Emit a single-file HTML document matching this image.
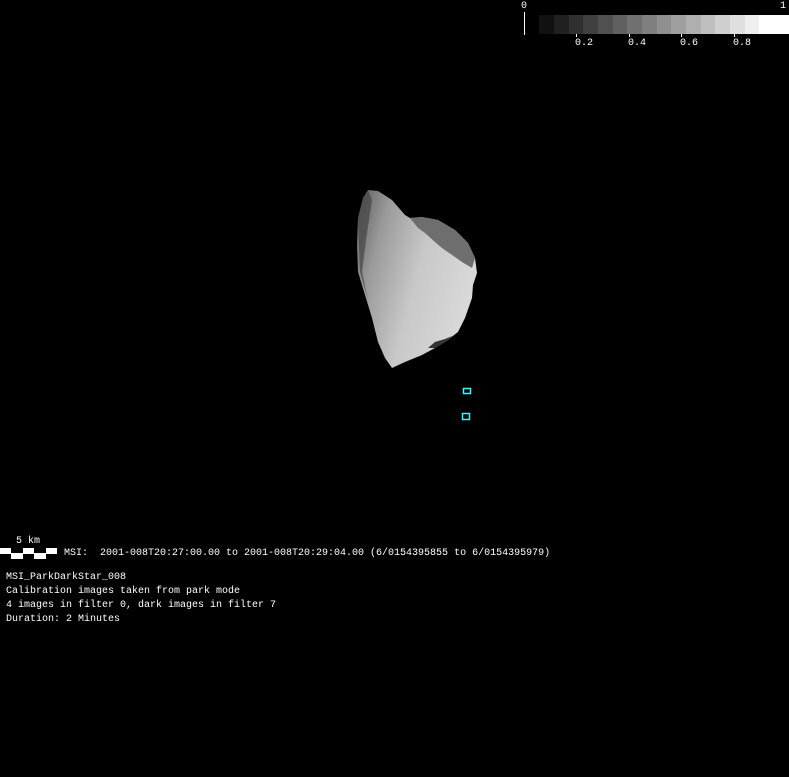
<!DOCTYPE html>
<html><head><meta charset="utf-8"><style>
html,body{margin:0;padding:0;background:#000;width:789px;height:777px;overflow:hidden}
body{position:relative;font-family:"Liberation Mono","DejaVu Sans Mono",monospace;color:#fff;font-size:10px}
.t{position:absolute;white-space:pre;line-height:14px}
</style></head><body>
<svg width="789" height="777" style="position:absolute;left:0;top:0">
<defs>
<linearGradient id="g" x1="0" y1="0" x2="1" y2="0.4">
<stop offset="0" stop-color="#5a5a5a"/>
<stop offset="0.25" stop-color="#9a9a9a"/>
<stop offset="0.6" stop-color="#c8c8c8"/>
<stop offset="1" stop-color="#d8d8d8"/>
</linearGradient>
</defs>
<g>
<rect x="539" y="15" width="15" height="19" fill="#111"/>
<rect x="554" y="15" width="15" height="19" fill="#202020"/>
<rect x="569" y="15" width="14" height="19" fill="#303030"/>
<rect x="583" y="15" width="15" height="19" fill="#404040"/>
<rect x="598" y="15" width="15" height="19" fill="#505050"/>
<rect x="613" y="15" width="14" height="19" fill="#606060"/>
<rect x="627" y="15" width="15" height="19" fill="#707070"/>
<rect x="642" y="15" width="15" height="19" fill="#7f7f7f"/>
<rect x="657" y="15" width="14" height="19" fill="#8f8f8f"/>
<rect x="671" y="15" width="15" height="19" fill="#9f9f9f"/>
<rect x="686" y="15" width="15" height="19" fill="#afafaf"/>
<rect x="701" y="15" width="14" height="19" fill="#bfbfbf"/>
<rect x="715" y="15" width="15" height="19" fill="#cfcfcf"/>
<rect x="730" y="15" width="15" height="19" fill="#dfdfdf"/>
<rect x="745" y="15" width="14" height="19" fill="#efefef"/>
<rect x="759" y="15" width="30" height="19" fill="#fff"/>
<rect x="524" y="12" width="1" height="23" fill="#fff"/>
<rect x="576" y="34" width="1" height="3" fill="#fff"/>
<rect x="629" y="34" width="1" height="3" fill="#fff"/>
<rect x="681" y="34" width="1" height="3" fill="#fff"/>
<rect x="734" y="34" width="1" height="3" fill="#fff"/>
</g>
<path d="M368,190 L378,191 L392,200 L405,215 L410,218 L422,217 L438,220 L455,230 L468,243 L475,258 L477,273 L473,285 L472,298 L465,318 L458,332 L445,342 L435,348 L422,355 L405,362 L392,368 L385,358 L378,342 L372,318 L365,295 L358,272 L357,245 L358,218 L363,198 Z" fill="url(#g)"/>
<path d="M410,218 L422,217 L438,220 L455,230 L468,243 L475,258 L472,268 L462,262 L455,257 L442,248 L435,242 L425,233 L418,228 Z" fill="#6e6e6e"/>
<path d="M428,348 L435,342 L445,339 L452,336 L445,342 L435,348 Z" fill="#333"/>
<path d="M358,218 L363,198 L368,190 L372,200 L366,240 L362,272 L368,300 L360,272 Z" fill="#444" opacity="0.7"/>
<rect x="463.5" y="388.5" width="7" height="5" fill="none" stroke="#3ff" stroke-width="1.5"/>
<rect x="462.5" y="413.5" width="7" height="6" fill="none" stroke="#3ff" stroke-width="1.5"/>
<rect x="0" y="548" width="57" height="11" fill="#fff"/>
<rect x="11" y="548" width="12" height="5" fill="#000"/>
<rect x="34" y="548" width="12" height="5" fill="#000"/>
<rect x="0" y="554" width="11" height="5" fill="#000"/>
<rect x="23" y="554" width="11" height="5" fill="#000"/>
<rect x="46" y="554" width="11" height="5" fill="#000"/>
</svg>
<div class="t" style="left:521px;top:0px">0</div>
<div class="t" style="left:780px;top:0px">1</div>
<div class="t" style="left:575px;top:37px">0.2</div>
<div class="t" style="left:628px;top:37px">0.4</div>
<div class="t" style="left:680px;top:37px">0.6</div>
<div class="t" style="left:733px;top:37px">0.8</div>
<div class="t" style="left:16px;top:535px">5 km</div>
<div class="t" style="left:64px;top:547px">MSI:  2001-008T20:27:00.00 to 2001-008T20:29:04.00 (6/0154395855 to 6/0154395979)</div>
<div class="t" style="left:6px;top:571px">MSI_ParkDarkStar_008
Calibration images taken from park mode
4 images in filter 0, dark images in filter 7
Duration: 2 Minutes</div>
</body></html>
